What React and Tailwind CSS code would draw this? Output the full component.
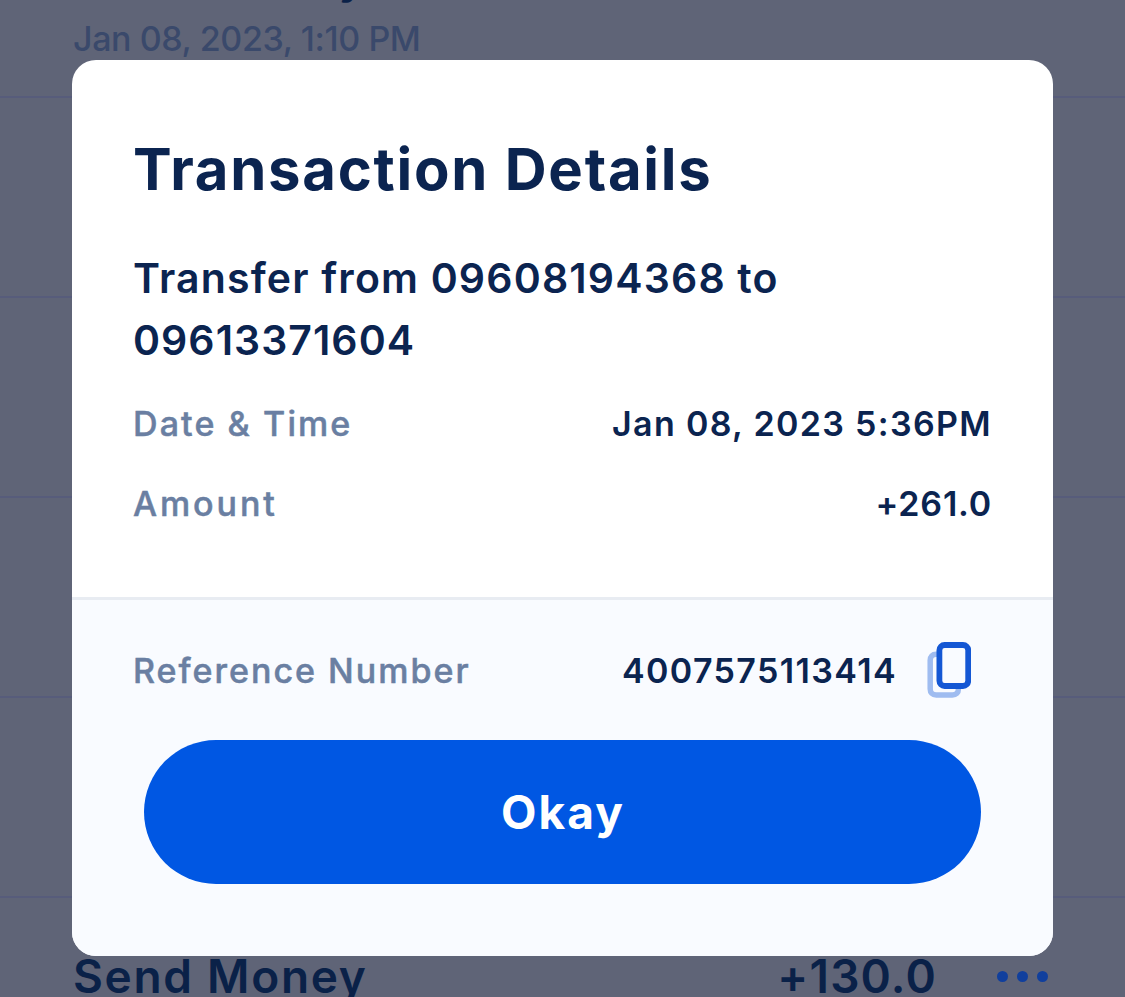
function CopyIcon() {
  return (
    <svg className="-mt-[2px]" width="44" height="56" viewBox="0 0 44 56" fill="none">
      <path
        d="M10 12.3H9.2C5.4 12.3 3.2 14.5 3.2 18.3V47C3.2 50.8 5.4 53 9.2 53H25.4C29.2 53 31.4 50.8 31.4 47V46"
        stroke="#9fbcf0"
        strokeWidth="5.5"
      />
      <rect x="12.4" y="3" width="28.8" height="41" rx="5.2" fill="#f9fbff" stroke="#1457d4" strokeWidth="5.8" />
    </svg>
  );
}

function HistoryRow({ amount }) {
  return (
    <div className="h-[200px] shrink-0 border-b-2 border-[#575c7b] pr-[77px] pl-[73px]">
      <div className="mt-[48px] flex h-[60px] items-center text-[46px] leading-[60px] font-semibold text-[#0a2148]">
        <span className="tracking-[1.7px]">Send Money</span>
        {amount && (
          <>
            <span className="ml-auto tracking-[1.2px]">{amount}</span>
            <span className="ml-[60px] flex gap-[9px]">
              <span className="size-[11px] rounded-full bg-[#103f9d]" />
              <span className="size-[11px] rounded-full bg-[#103f9d]" />
              <span className="size-[11px] rounded-full bg-[#103f9d]" />
            </span>
          </>
        )}
      </div>
      <div className="mt-[9px] text-[34px] leading-[48px] font-medium tracking-[-0.4px] text-[#3a496b]">
        Jan 08, 2023, 1:10 PM
      </div>
    </div>
  );
}

export default function App() {
  return (
    <div className="relative h-[997px] w-[1125px] overflow-hidden bg-[#5f6477] font-['Inter',sans-serif]">
      <div className="-mt-[102px] flex flex-col">
        <HistoryRow />
        <div className="h-[200px] shrink-0 border-b-2 border-[#575c7b]" />
        <div className="h-[200px] shrink-0 border-b-2 border-[#575c7b]" />
        <div className="h-[200px] shrink-0 border-b-2 border-[#575c7b]" />
        <div className="h-[200px] shrink-0 border-b-2 border-[#575c7b]" />
        <HistoryRow amount="+130.0" />
      </div>

      <div className="absolute inset-0 flex justify-center pt-[60px]">
        <div className="flex h-[896px] w-[981px] flex-col overflow-hidden rounded-[24px] bg-white text-[#0b2450]">
          <div className="h-[537px] px-[61px] pt-[69px]">
            <h1 className="text-[58px] leading-[80px] font-bold tracking-[1.75px]">Transaction Details</h1>
            <p className="mt-[38px] text-[41px] leading-[62px] font-semibold tracking-[1.05px]">
              <span className="tracking-[1.18px]">Transfer from 09608194368 to</span>
              <br />
              09613371604
            </p>
            <div className="mt-[28px] flex justify-between text-[34px] leading-[50px] font-semibold">
              <span className="font-medium tracking-[2.1px] text-[#6a7fa2] [-webkit-text-stroke:0.5px_#6a7fa2]">
                Date &amp; Time
              </span>
              <span className="tracking-[1.33px]">Jan 08, 2023 5:36PM</span>
            </div>
            <div className="mt-[30px] flex justify-between text-[34px] leading-[50px] font-semibold">
              <span className="font-medium tracking-[2.9px] text-[#6a7fa2] [-webkit-text-stroke:0.5px_#6a7fa2]">
                Amount
              </span>
              <span className="tracking-[0.8px]">+261.0</span>
            </div>
          </div>
          <div className="flex-1 border-t-[3px] border-[#e8ecf2] bg-[#f9fbff] pt-[41px]">
            <div className="flex h-[60px] items-center pr-[82px] pl-[61px] text-[34px] leading-[50px] font-semibold">
              <span className="font-medium tracking-[2px] text-[#6a7fa2] [-webkit-text-stroke:0.5px_#6a7fa2]">
                Reference Number
              </span>
              <span className="mr-[30px] ml-auto tracking-[1.38px]">4007575113414</span>
              <CopyIcon />
            </div>
            <button className="mx-[72px] mt-[39px] flex h-[144px] w-[837px] items-center justify-center rounded-full bg-[#0057e3] pl-[1px] text-[46px] leading-[60px] font-bold tracking-[2.1px] text-white">
              Okay
            </button>
          </div>
        </div>
      </div>
    </div>
  );
}
